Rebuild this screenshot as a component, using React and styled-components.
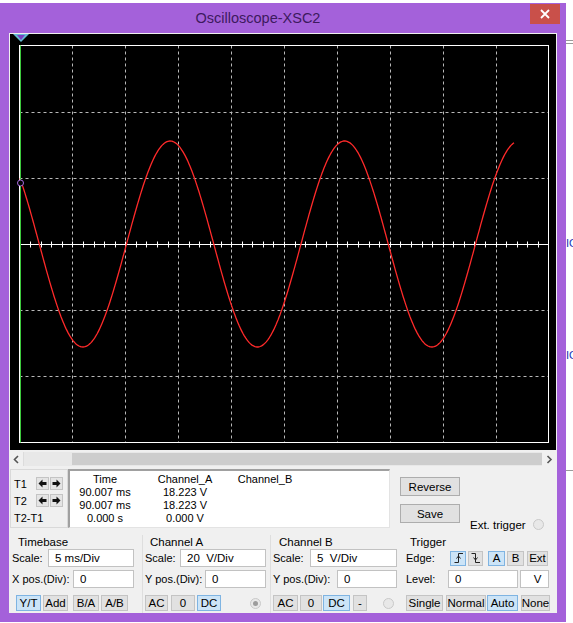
import styled, { createGlobalStyle } from 'styled-components'

const GlobalStyle = createGlobalStyle`
  html, body { margin: 0; padding: 0; background: #fff; }
  body { font-family: 'Liberation Sans', Arial, sans-serif; font-size: 11px; color: #000; }
  * { box-sizing: border-box; }
`

const Page = styled.div`
  display: flex;
  width: 573px;
  height: 623px;
  padding-top: 3px;
  overflow: hidden;
`

const Window = styled.div`
  width: 566px;
  height: 619px;
  flex: none;
  background: #a461da;
  padding: 0 9px 9px 9px;
  display: flex;
  flex-direction: column;
`

const TitleBar = styled.div`
  height: 30px;
  margin: 0 -9px;
  display: flex;
  align-items: flex-start;
`

const Title = styled.div`
  flex: 1;
  line-height: 30px;
  text-align: center;
  padding-right: 14px;
  font-size: 14.5px;
  color: #3d1a5e;
`

const Close = styled.div`
  width: 30px;
  height: 20px;
  margin: 1px 6px 0 0;
  background: #c9504a;
  display: flex;
  align-items: center;
  justify-content: center;
`

const Client = styled.div`
  flex: 1;
  background: #f0f0f0;
  display: flex;
  flex-direction: column;
  padding: 1px 1px 0 1px;
`

const ScreenSvg = styled.svg`
  display: block;
  width: 546px;
  height: 416px;
  background: #000;
`

const Scrollbar = styled.div`
  margin-top: 2px;
  height: 14px;
  width: 546px;
  display: flex;
`

const ScrollArrow = styled.div`
  width: 14px;
  display: flex;
  align-items: center;
  justify-content: center;
  border-right: ${p => (p.$left ? '1px solid #dcdcdc' : 'none')};
`

const Track = styled.div`
  flex: 1;
  background: #e8e8e8;
  display: flex;
  padding: 1px 0 1px 48px;
`

const Thumb = styled.div`
  flex: 1;
  background: #cdcdcd;
`

const CursorRow = styled.div`
  margin-top: 3px;
  height: 59px;
  display: flex;
`

const CursorBox = styled.div`
  width: 58px;
  border: 1px solid #d9d9d9;
  padding: 6px 0 0 3px;
  display: flex;
  flex-direction: column;
`

const CursorLine = styled.div`
  display: flex;
  align-items: center;
  height: ${p => p.$h || 15}px;
  margin-top: ${p => p.$mt || 0}px;
`

const CursorName = styled.span`
  width: 22px;
`

const ArrowBtn = styled.div`
  width: 13px;
  height: 13px;
  margin-left: ${p => p.$ml || 0}px;
  background: #e4e4e4;
  border: 1px solid #c4c4c4;
  display: flex;
  align-items: center;
  justify-content: center;
`

const DataBox = styled.div`
  width: 322px;
  background: #fff;
  border-top: 2px solid #a0a0a0;
  border-left: 2px solid #a0a0a0;
  border-right: 1px solid #e3e3e3;
  border-bottom: 1px solid #e3e3e3;
  padding-top: 2px;
  display: grid;
  grid-template-columns: 70px 90px 70px;
  grid-auto-rows: 13px;
  line-height: 13px;
  text-align: center;
  align-content: start;
`

const SideButtons = styled.div`
  margin-left: 10px;
  padding-top: 8px;
  display: flex;
  flex-direction: column;
  gap: 8px;
`

const PushButton = styled.div`
  width: 60px;
  height: 19px;
  background: #e1e1e1;
  border: 1px solid #adadad;
  display: flex;
  align-items: center;
  justify-content: center;
  font-size: 11.5px;
`

const ExtTrigger = styled.div`
  margin-left: 10px;
  align-self: flex-end;
  margin-bottom: -3px;
  display: flex;
  align-items: center;
  gap: 7px;
  height: 13px;
  font-size: 11.5px;
`

const Radio = styled.span`
  width: 11px;
  height: 11px;
  flex: none;
  margin-left: ${p => p.$ml || 0}px;
  border-radius: 50%;
  border: 1px solid #c9c9c9;
  background: #e8e8e8;
  display: flex;
  align-items: center;
  justify-content: center;
  &::after {
    content: '';
    width: 5px;
    height: 5px;
    border-radius: 50%;
    background: ${p => (p.$on ? '#9c9c9c' : 'transparent')};
  }
`

const ControlsRow = styled.div`
  margin-top: 7px;
  height: 78px;
  display: flex;
`

const Group = styled.div`
  width: ${p => p.$w}px;
  padding: 1px 0 0 ${p => p.$pl}px;
  border-right: ${p => (p.$sep ? '1px solid #dedede' : 'none')};
  display: flex;
  flex-direction: column;
`

const GroupTitle = styled.div`
  line-height: 13px;
  margin-left: ${p => p.$ml}px;
  font-size: 11.5px;
`

const Row = styled.div`
  display: flex;
  align-items: center;
  height: ${p => p.$h}px;
  margin-top: ${p => p.$mt || 0}px;
`

const Label = styled.span`
  width: ${p => p.$w}px;
  flex: none;
`

const Field = styled.input`
  width: ${p => p.$w}px;
  height: 18px;
  margin-left: ${p => p.$ml || 0}px;
  border: 1px solid #c2c2c2;
  background: #fff;
  padding: 0 0 0 6px;
  font: inherit;
  font-size: 11.5px;
  color: #000;
  text-align: ${p => (p.$center ? 'center' : 'left')};
  outline: none;
`

const Btn = styled.div`
  width: ${p => p.$w}px;
  height: ${p => p.$h || 16}px;
  margin-left: ${p => p.$ml || 0}px;
  flex: none;
  background: ${p => (p.$on ? '#cce4f7' : '#e1e1e1')};
  border: 1px solid ${p => (p.$on ? '#7fb4e2' : '#c4c4c4')};
  display: flex;
  align-items: center;
  justify-content: center;
  font-size: 11.5px;
`

const Desktop = styled.div`
  flex: 1;
  display: flex;
  flex-direction: column;
  overflow: hidden;
  color: #2035b8;
  font-size: 11px;
`

const DeskText = styled.div`
  margin-top: ${p => p.$mt}px;
  line-height: 12px;
  white-space: nowrap;
`

const DeskLine = styled.div`
  margin-top: ${p => p.$mt}px;
  height: 1px;
  background: #9a9a9a;
`

function Screen() {
  const GL = 9.5, GR = 538.5, GT = 11.5, GB = 408.5
  const dx = (GR - GL) / 10
  const dy = (GB - GT) / 6
  const cy = 210.5
  const vx = []
  for (let i = 1; i < 10; i++) vx.push(Math.round(GL + i * dx) + 0.5)
  const hy = [1, 2, 4, 5].map(j => Math.round(GT + j * dy) + 0.5)
  const ticks = []
  for (let x = GL; x <= GR; x += dx / 5) ticks.push(Math.round(x) + 0.5)

  let wave = ''
  for (let x = 10; x <= 504; x += 1) {
    const y = 210 - 103 * Math.sin((2 * Math.PI * (x - 116.5)) / 174.5)
    wave += (x === 10 ? 'M' : 'L') + x + ' ' + y.toFixed(1) + ' '
  }

  return (
    <ScreenSvg viewBox="0 0 546 416">
      {vx.map(x => (
        <line key={'v' + x} x1={x} y1={GT} x2={x} y2={GB} stroke="#b8b8b8" strokeDasharray="3 3" />
      ))}
      {hy.map(y => (
        <line key={'h' + y} x1={GL} y1={y} x2={GR} y2={y} stroke="#b8b8b8" strokeDasharray="3 3" />
      ))}
      <line x1={GL} y1={cy} x2={GR} y2={cy} stroke="#fff" />
      {ticks.map(x => (
        <line key={'t' + x} x1={x} y1={cy - 3} x2={x} y2={cy + 3} stroke="#fff" />
      ))}
      <rect x={GL} y={GT} width={GR - GL} height={GB - GT} fill="none" stroke="#fff" />
      <path d={wave} fill="none" stroke="#ff2a2a" strokeWidth="1.3" />
      <line x1="10.5" y1={GT} x2="10.5" y2={GB} stroke="#3cc83c" />
      <circle cx="10.5" cy="149" r="3" fill="#000" stroke="#a86ce0" />
      <polygon points="3,0 19,0 11,8" fill="#63b9d2" />
      <polygon points="7,1 15,1 11,6" fill="#7b3fc4" />
    </ScreenSvg>
  )
}

function ArrowIcon({ dir }) {
  const d = dir === 'left' ? 'M0.5 4.5 L4.5 0.5 V3 H8.5 V6 H4.5 V8.5 Z' : 'M8.5 4.5 L4.5 0.5 V3 H0.5 V6 H4.5 V8.5 Z'
  return (
    <svg width="9" height="9" viewBox="0 0 9 9">
      <path d={d} fill="#111" />
    </svg>
  )
}

function Chevron({ dir }) {
  const pts = dir === 'left' ? '5,1 1.5,4.5 5,8' : '1.5,1 5,4.5 1.5,8'
  return (
    <svg width="7" height="9" viewBox="0 0 7 9">
      <polyline points={pts} fill="none" stroke="#555" strokeWidth="1.6" />
    </svg>
  )
}

function EdgeIcon({ rising }) {
  const d = rising ? 'M1.5 10.5 H5.5 V1.5 H10' : 'M1.5 1.5 H5.5 V10.5 H10'
  const head = rising ? 'M3.5 6.5 L5.5 4 L7.5 6.5' : 'M3.5 5.5 L5.5 8 L7.5 5.5'
  return (
    <svg width="11" height="12" viewBox="0 0 11 12">
      <path d={d} fill="none" stroke="#222" />
      <path d={head} fill="none" stroke="#222" />
    </svg>
  )
}

export default function App() {
  return (
    <Page>
      <GlobalStyle />
      <Window>
        <TitleBar>
          <Title>Oscilloscope-XSC2</Title>
          <Close>
            <svg width="10" height="10" viewBox="0 0 10 10">
              <path d="M1 1 L9 9 M9 1 L1 9" stroke="#fff" strokeWidth="1.8" />
            </svg>
          </Close>
        </TitleBar>
        <Client>
          <Screen />
          <Scrollbar>
            <ScrollArrow $left>
              <Chevron dir="left" />
            </ScrollArrow>
            <Track>
              <Thumb />
            </Track>
            <ScrollArrow>
              <Chevron dir="right" />
            </ScrollArrow>
          </Scrollbar>

          <CursorRow>
            <CursorBox>
              <CursorLine>
                <CursorName>T1</CursorName>
                <ArrowBtn><ArrowIcon dir="left" /></ArrowBtn>
                <ArrowBtn $ml={1}><ArrowIcon dir="right" /></ArrowBtn>
              </CursorLine>
              <CursorLine $mt={2}>
                <CursorName>T2</CursorName>
                <ArrowBtn><ArrowIcon dir="left" /></ArrowBtn>
                <ArrowBtn $ml={1}><ArrowIcon dir="right" /></ArrowBtn>
              </CursorLine>
              <CursorLine $mt={3} $h={13}>T2-T1</CursorLine>
            </CursorBox>
            <DataBox>
              <span>Time</span><span>Channel_A</span><span>Channel_B</span>
              <span>90.007 ms</span><span>18.223 V</span><span></span>
              <span>90.007 ms</span><span>18.223 V</span><span></span>
              <span>0.000 s</span><span>0.000 V</span><span></span>
            </DataBox>
            <SideButtons>
              <PushButton>Reverse</PushButton>
              <PushButton>Save</PushButton>
            </SideButtons>
            <ExtTrigger>
              Ext. trigger
              <Radio />
            </ExtTrigger>
          </CursorRow>

          <ControlsRow>
            <Group $w={133} $pl={2} $sep>
              <GroupTitle $ml={6}>Timebase</GroupTitle>
              <Row $h={18}>
                <Label $w={36}>Scale:</Label>
                <Field $w={86} readOnly value="5 ms/Div" />
              </Row>
              <Row $h={18} $mt={3}>
                <Label $w={61}>X pos.(Div):</Label>
                <Field $w={61} readOnly value="0" />
              </Row>
              <Row $h={16} $mt={7}>
                <Btn $w={25} $ml={4} $on>Y/T</Btn>
                <Btn $w={25} $ml={2}>Add</Btn>
                <Btn $w={26} $ml={5}>B/A</Btn>
                <Btn $w={27} $ml={2}>A/B</Btn>
              </Row>
            </Group>

            <Group $w={128} $pl={2} $sep>
              <GroupTitle $ml={5}>Channel A</GroupTitle>
              <Row $h={18}>
                <Label $w={35}>Scale:</Label>
                <Field $w={86} readOnly value="20  V/Div" />
              </Row>
              <Row $h={18} $mt={3}>
                <Label $w={60}>Y pos.(Div):</Label>
                <Field $w={61} readOnly value="0" />
              </Row>
              <Row $h={16} $mt={7}>
                <Btn $w={23}>AC</Btn>
                <Btn $w={24} $ml={3}>0</Btn>
                <Btn $w={24} $ml={2} $on>DC</Btn>
                <Radio $ml={29} $on />
              </Row>
            </Group>

            <Group $w={131} $pl={2}>
              <GroupTitle $ml={6}>Channel B</GroupTitle>
              <Row $h={18}>
                <Label $w={37}>Scale:</Label>
                <Field $w={87} readOnly value="5  V/Div" />
              </Row>
              <Row $h={18} $mt={3}>
                <Label $w={64}>Y pos.(Div):</Label>
                <Field $w={60} readOnly value="0" />
              </Row>
              <Row $h={16} $mt={7}>
                <Btn $w={25}>AC</Btn>
                <Btn $w={22} $ml={2}>0</Btn>
                <Btn $w={27} $ml={1} $on>DC</Btn>
                <Btn $w={14} $ml={3}>-</Btn>
                <Radio $ml={16} />
              </Row>
            </Group>

            <Group $w={151} $pl={4}>
              <GroupTitle $ml={4}>Trigger</GroupTitle>
              <Row $h={18}>
                <Label $w={44}>Edge:</Label>
                <Btn $w={16} $h={15} $on><EdgeIcon rising /></Btn>
                <Btn $w={15} $h={15} $ml={2}><EdgeIcon /></Btn>
                <Btn $w={17} $h={15} $ml={5} $on>A</Btn>
                <Btn $w={17} $h={15} $ml={2}>B</Btn>
                <Btn $w={21} $h={15} $ml={3}>Ext</Btn>
              </Row>
              <Row $h={18} $mt={3}>
                <Label $w={42}>Level:</Label>
                <Field $w={70} readOnly value="0" />
                <Field $w={29} $ml={2} $center readOnly value="V" />
              </Row>
              <Row $h={16} $mt={7}>
                <Btn $w={37}>Single</Btn>
                <Btn $w={40} $ml={3}>Normal</Btn>
                <Btn $w={31} $ml={1} $on>Auto</Btn>
                <Btn $w={29} $ml={3}>None</Btn>
              </Row>
            </Group>
          </ControlsRow>
        </Client>
      </Window>
      <Desktop>
        <DeskLine $mt={37} />
        <DeskLine $mt={2} />
        <DeskText $mt={193}>IO</DeskText>
        <DeskText $mt={100}>IO</DeskText>
        <DeskLine $mt={109} />
      </Desktop>
    </Page>
  )
}
